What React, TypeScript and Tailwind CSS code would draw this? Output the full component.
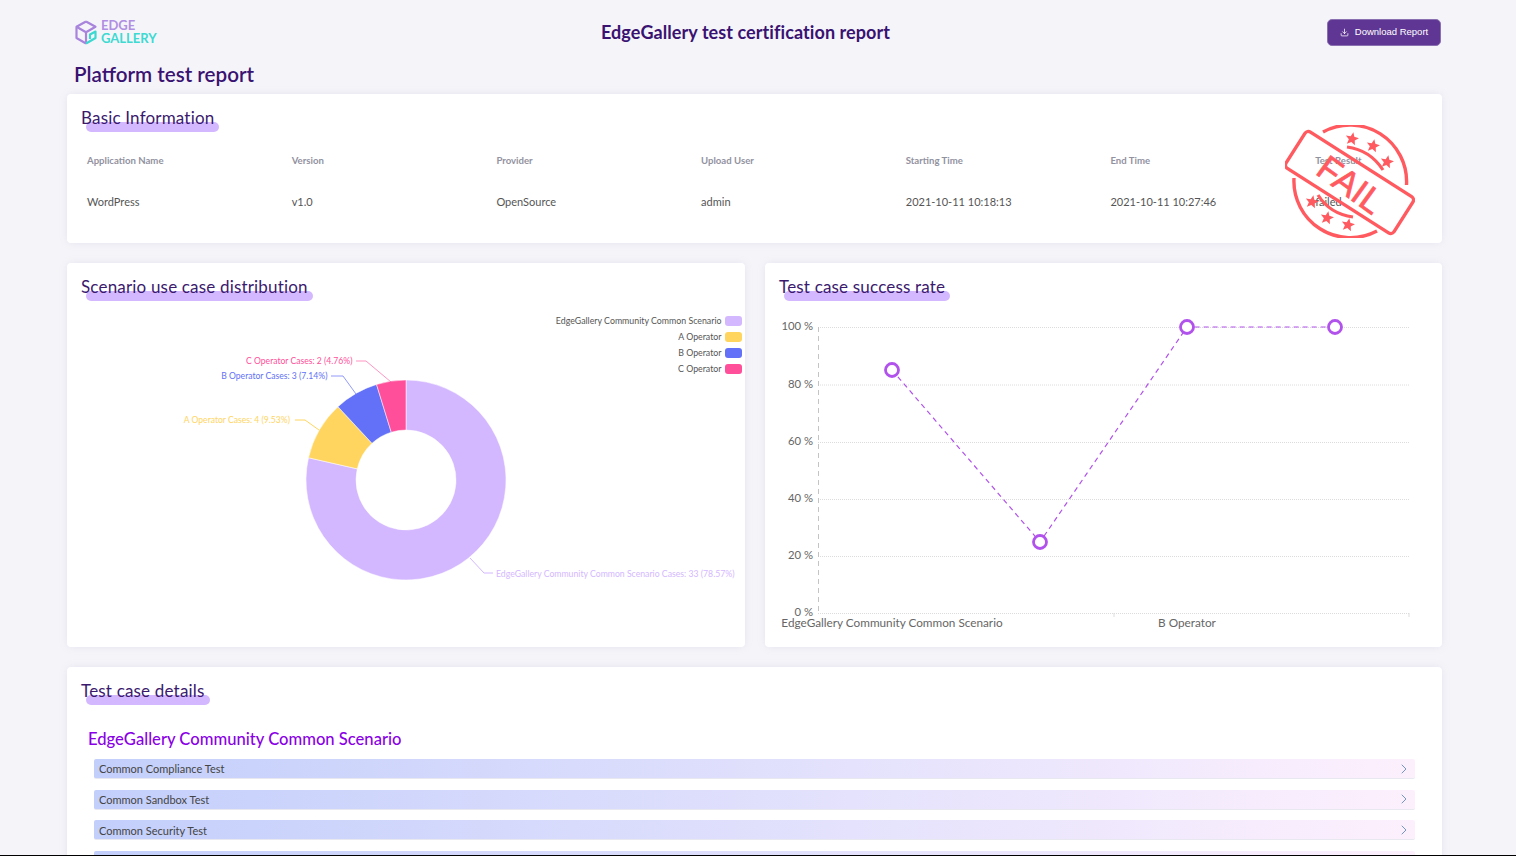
import { ChevronRight, Download } from "lucide-react";

const font = { fontFamily: "Lato, sans-serif" };

function CardTitle({ text }: { text: string }) {
  return (
    <div className="pl-[14px] pt-[12px] h-[42px]">
      <span className="relative inline-block text-[17px] leading-[24px] tracking-[0.18px] text-[#3b1a6e] font-normal">
        <span className="absolute left-[5px] right-[-5px] top-[16px] h-[10px] rounded-full bg-[#d4b8ff]" />
        <span className="relative">{text}</span>
      </span>
    </div>
  );
}

function Logo() {
  return (
    <div className="flex items-center gap-[4px]">
      <svg width="22" height="25" viewBox="0 0 22 25" fill="none">
        <path d="M11 1.5 L1.5 6.8 V18 L11 23.5" stroke="#a884dc" strokeWidth="2.2" strokeLinejoin="round" />
        <path d="M11 1.5 L20.5 6.8 L11 12.2 L1.5 6.8 M11 12.2 V23.5" stroke="#a884dc" strokeWidth="2.2" strokeLinejoin="round" />
        <path d="M11 23.5 L20.5 18 V11.5 L15 14.5 V19" stroke="#3dd8d0" strokeWidth="2.2" strokeLinejoin="round" />
      </svg>
      <div className="flex flex-col text-[13px] leading-[13px] font-bold">
        <span className="text-[#b08fe2]">EDGE</span>
        <span className="text-[#3ed9d2]">GALLERY</span>
      </div>
    </div>
  );
}

function Star({ cx, cy, r = 7 }: { cx: number; cy: number; r?: number }) {
  const pts = Array.from({ length: 10 }, (_, i) => {
    const rad = i % 2 === 0 ? r : r * 0.45;
    const a = -Math.PI / 2 + (i * Math.PI) / 5 + 0.2;
    return `${(cx + rad * Math.cos(a)).toFixed(2)},${(cy + rad * Math.sin(a)).toFixed(2)}`;
  }).join(" ");
  return <polygon points={pts} fill="#ff5a5f" />;
}

function Stamp() {
  const c = "#ff5a5f";
  return (
    <svg className="absolute left-[1218px] top-[31px]" width="130" height="113" viewBox="1285 125 130 113" fill="none">
      <path d="M1323 132 A56.5 56.5 0 0 1 1406.5 185" stroke={c} strokeWidth="3.4" />
      <path d="M1294 178 A56.5 56.5 0 0 0 1377 231" stroke={c} strokeWidth="3.4" />
      <path d="M1347 147 Q1370 150 1383 170" stroke={c} strokeWidth="3.2" />
      <path d="M1318 195 Q1330 214 1353 217" stroke={c} strokeWidth="3.2" />
      <rect x="1285.5" y="161" width="128" height="43" rx="4" transform="rotate(32.5 1349.5 182.5)" stroke={c} strokeWidth="3.4" />
      <Star cx={1352} cy={139} />
      <Star cx={1373} cy={146} />
      <Star cx={1387} cy={162} />
      <Star cx={1312} cy={202} />
      <Star cx={1327} cy={218} />
      <Star cx={1348} cy={225} />
      <text x="1351" y="197" textAnchor="middle" fontSize="35" fontWeight="400" stroke={c} strokeWidth="0.7" fill={c} fontFamily="'Liberation Sans', sans-serif" transform="rotate(36 1351 184)">FAIL</text>
    </svg>
  );
}

function polar(cx: number, cy: number, r: number, deg: number) {
  const a = ((deg - 90) * Math.PI) / 180;
  return [cx + r * Math.cos(a), cy + r * Math.sin(a)];
}
function arc(cx: number, cy: number, R: number, r: number, a0: number, a1: number) {
  const [x0, y0] = polar(cx, cy, R, a0);
  const [x1, y1] = polar(cx, cy, R, a1);
  const [x2, y2] = polar(cx, cy, r, a1);
  const [x3, y3] = polar(cx, cy, r, a0);
  const large = a1 - a0 > 180 ? 1 : 0;
  return `M${x0} ${y0} A${R} ${R} 0 ${large} 1 ${x1} ${y1} L${x2} ${y2} A${r} ${r} 0 ${large} 0 ${x3} ${y3} Z`;
}

const slices = [
  { c: "#d4b8ff", a: 0, b: 282.86 },
  { c: "#ffd55f", a: 282.86, b: 317.14 },
  { c: "#6271f7", a: 317.14, b: 342.86 },
  { c: "#ff4f9a", a: 342.86, b: 360 },
];

function Donut() {
  const legend = [
    ["EdgeGallery Community Common Scenario", "#d4b8ff", 321],
    ["A Operator", "#ffd55f", 337],
    ["B Operator", "#6271f7", 353],
    ["C Operator", "#ff4f9a", 369],
  ] as const;
  return (
    <svg className="block" width="678" height="342" viewBox="67 305 678 342" fontFamily="Lato, sans-serif">
      {slices.map((s) => (
        <path key={s.c} d={arc(406, 480, 100, 50, s.a, s.b)} fill={s.c} stroke="#fff" strokeWidth="0.5" />
      ))}
      {legend.map(([t, c, y]) => (
        <g key={t}>
          <text x="721.5" y={y + 3} textAnchor="end" fontSize="8.8" fill="#555">{t}</text>
          <rect x="725" y={y - 5} width="17" height="10" rx="3" fill={c} />
        </g>
      ))}
      <path d="M356 361 H366 L391 382" stroke="#ff4f9a" strokeOpacity=".6" fill="none" />
      <path d="M331 376 H343 L356 394" stroke="#6271f7" strokeOpacity=".7" fill="none" />
      <path d="M295 420 H305 L319 430" stroke="#ffd55f" fill="none" />
      <path d="M470 558 L484 573 H493" stroke="#d4b8ff" fill="none" />
      <text x="352.5" y="364" textAnchor="end" fontSize="8.6" fill="#ff4f9a">C Operator Cases: 2 (4.76%)</text>
      <text x="327.5" y="379" textAnchor="end" fontSize="8.6" fill="#6271f7">B Operator Cases: 3 (7.14%)</text>
      <text x="290" y="423" textAnchor="end" fontSize="8.6" fill="#ffd55f">A Operator Cases: 4 (9.53%)</text>
      <text x="496" y="576.5" fontSize="8.7" fill="#d4b8ff">EdgeGallery Community Common Scenario Cases: 33 (78.57%)</text>
    </svg>
  );
}

function LineChart() {
  const rows = [
    ["100 %", 327],
    ["80 %", 384.5],
    ["60 %", 442],
    ["40 %", 499],
    ["20 %", 556],
    ["0 %", 613],
  ] as const;
  const pts = [
    [892, 370],
    [1040, 542],
    [1187, 327],
    [1335, 327],
  ];
  return (
    <svg className="block" width="677" height="342" viewBox="765 305 677 342" fontFamily="Lato, sans-serif">
      {rows.map(([t, y]) => (
        <g key={t}>
          <line x1="818" x2="1409" y1={y + 0.5} y2={y + 0.5} stroke="#dcdcdc" strokeWidth="1" strokeDasharray="1 1" />
          <text x="813" y={y + 3} textAnchor="end" fontSize="11.3" fill="#666">{t}</text>
        </g>
      ))}
      <line x1="818.5" x2="818.5" y1="327" y2="613" stroke="#c4c4c4" strokeDasharray="5 4" />
      <line x1="1114" x2="1114" y1="613" y2="617" stroke="#ddd" />
      <line x1="1409" x2="1409" y1="613" y2="617" stroke="#ddd" />
      <polyline points={pts.map((p) => p.join(",")).join(" ")} fill="none" stroke="#b152ec" strokeWidth="1.2" strokeDasharray="5 4" />
      {pts.map(([x, y]) => (
        <circle key={x} cx={x} cy={y} r="6.5" fill="#fff" stroke="#b152ec" strokeWidth="2.8" />
      ))}
      <text x="892" y="627" textAnchor="middle" fontSize="11.75" fill="#666">EdgeGallery Community Common Scenario</text>
      <text x="1187" y="627" textAnchor="middle" fontSize="11.75" fill="#666">B Operator</text>
    </svg>
  );
}

const info = [
  ["Application Name", "WordPress"],
  ["Version", "v1.0"],
  ["Provider", "OpenSource"],
  ["Upload User", "admin"],
  ["Starting Time", "2021-10-11 10:18:13"],
  ["End Time", "2021-10-11 10:27:46"],
  ["Test Result", "failed"],
];

function Row({ text }: { text?: string }) {
  return (
    <div className="flex items-center justify-between h-[20px] pl-[5px] pr-[3px] mb-[10.67px] border-b border-[#e8e8f0] rounded-[2px] bg-gradient-to-r from-[#c3cffb] to-[#fdf0fd]">
      <span className="pt-[2px] text-[11px] text-[#444]">{text}</span>
      <ChevronRight size={16} strokeWidth={1.3} className="text-[#5f86bc]" />
    </div>
  );
}

export default function App() {
  return (
    <div className="h-screen overflow-hidden flex flex-col bg-[#f5f5f9]" style={font}>
      <div className="flex-1 min-h-0 overflow-hidden">
        <div className="ml-[67px] w-[1375px]">
          <header className="relative flex items-center justify-between h-[64px] pl-[8px] pr-[1px]">
            <Logo />
            <h1 className="absolute left-0 right-0 text-center pr-[18px] text-[18px] tracking-[0.08px] font-bold text-[#3a1272]">
              EdgeGallery test certification report
            </h1>
            <button className="relative flex items-center justify-center gap-[6px] w-[114px] h-[27px] rounded-[5px] bg-[#5f3694] border border-[#8a70b0] text-white text-[9.5px] font-['Liberation_Sans',sans-serif]">
              <Download size={9} />
              Download Report
            </button>
          </header>
          <h2 className="pl-[7px] h-[30px] -mt-[1px] mb-[1px] text-[20.6px] leading-[22px] font-semibold text-[#3a1272]">Platform test report</h2>

          <section className="relative h-[149px] bg-white rounded-[4px] shadow-[0_0_8px_rgba(120,110,170,0.12)]">
            <CardTitle text="Basic Information" />
            <div className="ml-[20px] mt-[17px] grid grid-cols-[repeat(6,204.7px)_1fr] grid-rows-[16px_16px] gap-y-[25px] text-[11px] items-center">
              {info.map(([k]) => (
                <span key={k} className="font-bold text-[9.6px] text-[#92929f] whitespace-nowrap">{k}</span>
              ))}
              {info.map(([k, v]) => (
                <span key={k} className="text-[#555] whitespace-nowrap">{v}</span>
              ))}
            </div>
            <Stamp />
          </section>

          <div className="grid grid-cols-[678px_677px] gap-x-[20px] mt-[20px]">
            <section className="h-[384px] bg-white rounded-[4px] shadow-[0_0_8px_rgba(120,110,170,0.12)]">
              <CardTitle text="Scenario use case distribution" />
              <Donut />
            </section>
            <section className="h-[384px] bg-white rounded-[4px] shadow-[0_0_8px_rgba(120,110,170,0.12)]">
              <CardTitle text="Test case success rate" />
              <LineChart />
            </section>
          </div>

          <section className="mt-[20px] h-[260px] bg-white rounded-[4px] shadow-[0_0_8px_rgba(120,110,170,0.12)]">
            <CardTitle text="Test case details" />
            <h3 className="pl-[21px] pt-[18px] h-[50px] text-[16.6px] leading-[24px] font-medium text-[#8a00e6]">
              EdgeGallery Community Common Scenario
            </h3>
            <div className="ml-[27px] mr-[27px]">
              <Row text="Common Compliance Test" />
              <Row text="Common Sandbox Test" />
              <Row text="Common Security Test" />
              <Row />
            </div>
          </section>
        </div>
      </div>
      <div className="h-[1.5px] shrink-0 bg-black" />
    </div>
  );
}
